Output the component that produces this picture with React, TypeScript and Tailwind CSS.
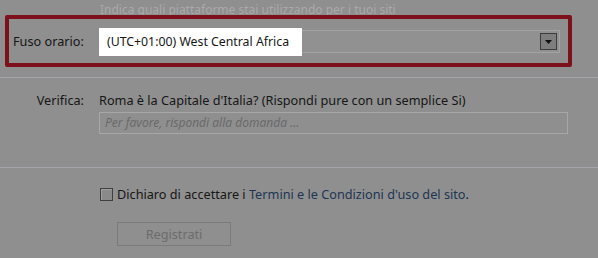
export default function App() {
  return (
    <div
      className="relative w-[598px] h-[258px] overflow-hidden bg-[#8f8f8f] text-[12.7px] text-[#161616]"
      style={{ fontFamily: '"Noto Sans", "Open Sans", sans-serif' }}
    >
      {/* hint text, cut off at the top */}
      <div className="h-[19px] -mb-[4px] pt-[2px] pl-[100px] text-[12px] leading-[15px] text-[#a9a9a9]">
        Indica quali piattaforme stai utilizzando per i tuoi siti
      </div>

      {/* highlighted time zone row */}
      <div className="relative ml-[5px] w-[567px] h-[52px] border-[4px] border-[#7d111b] rounded-[2px] flex items-center">
        <span className="w-[90px] pl-[4px] mt-[2px]">Fuso orario:</span>
        <div className="relative flex-1 mr-[8px] h-[23px] mt-[1px] border border-[#a3a3a3] bg-[#919191] flex items-center">
          <div className="absolute -left-px -top-[3px] w-[203px] h-[28px] bg-white flex items-center pl-[8px] text-[12.3px]">
            (UTC+01:00) West Central Africa
          </div>
          <div className="ml-auto mr-[2px] w-[17px] h-[17px] border border-[#3c3c3c] bg-[#7e7e7e] flex items-center justify-center">
            <svg width="7" height="4" viewBox="0 0 7 4">
              <path d="M0 0 H7 L3.5 4 Z" fill="#111" />
            </svg>
          </div>
        </div>
      </div>

      <div className="mt-[10px] h-px bg-[#a2a6aa]" />

      {/* verification */}
      <div className="flex pt-[13px]">
        <span className="w-[84px] text-right">Verifica:</span>
        <div className="ml-[15px] flex flex-col">
          <span className="leading-[18px]">Roma è la Capitale d'Italia? (Rispondi pure con un semplice Si)</span>
          <div className="mt-[3px] w-[469px] h-[22px] border border-[#a7a7a7] flex items-center pl-[5px] italic text-[12px] text-[#6a6a6a]">
            Per favore, rispondi alla domanda ...
          </div>
        </div>
      </div>

      <div className="mt-[33px] h-px bg-[#a2a6aa]" />

      {/* terms */}
      <div className="flex items-center pl-[100px] pt-[17px]">
        <span className="w-[13px] h-[13px] border border-[#3f3f3f] bg-[#8a8a8a] shadow-[inset_1px_1px_0_#a0a0a0]" />
        <span className="ml-[4px]">
          Dichiaro di accettare i{' '}
          <span className="text-[#1d3552]">Termini e le Condizioni d'uso del sito</span>.
        </span>
      </div>

      <div className="pl-[117px] pt-[18px]">
        <button className="w-[114px] h-[24px] border border-[#7b7b7b] bg-[#8f8f8f] text-[#6c6c6c] text-[12.7px]">
          Registrati
        </button>
      </div>
    </div>
  );
}
